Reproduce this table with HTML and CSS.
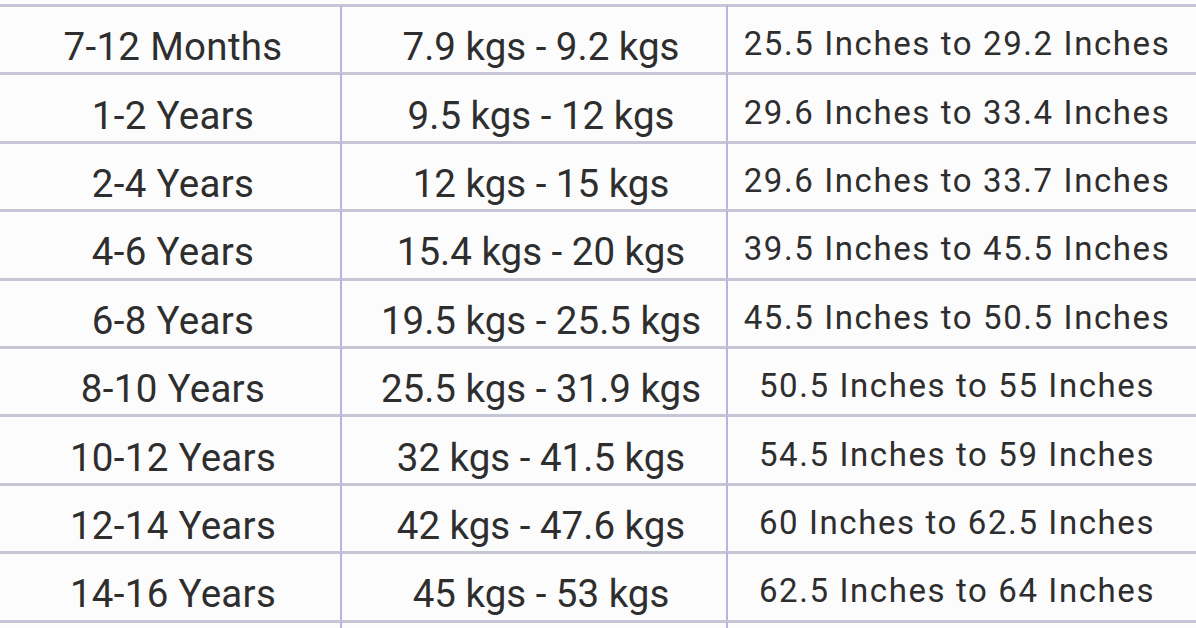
FILE: index.html
```html
<!DOCTYPE html>
<html>
<head>
<meta charset="utf-8">
<link rel="stylesheet" href="styles.css">
</head>
<body>
<div class="chart">
  <div class="cell">7-12 Months</div><div class="cell">7.9 kgs - 9.2 kgs</div><div class="cell">25.5 Inches to 29.2 Inches</div>
  <div class="cell">1-2 Years</div><div class="cell">9.5 kgs - 12 kgs</div><div class="cell">29.6 Inches to 33.4 Inches</div>
  <div class="cell">2-4 Years</div><div class="cell">12 kgs - 15 kgs</div><div class="cell">29.6 Inches to 33.7 Inches</div>
  <div class="cell">4-6 Years</div><div class="cell">15.4 kgs - 20 kgs</div><div class="cell">39.5 Inches to 45.5 Inches</div>
  <div class="cell">6-8 Years</div><div class="cell">19.5 kgs - 25.5 kgs</div><div class="cell">45.5 Inches to 50.5 Inches</div>
  <div class="cell">8-10 Years</div><div class="cell">25.5 kgs - 31.9 kgs</div><div class="cell">50.5 Inches to 55 Inches</div>
  <div class="cell">10-12 Years</div><div class="cell">32 kgs - 41.5 kgs</div><div class="cell">54.5 Inches to 59 Inches</div>
  <div class="cell">12-14 Years</div><div class="cell">42 kgs - 47.6 kgs</div><div class="cell">60 Inches to 62.5 Inches</div>
  <div class="cell">14-16 Years</div><div class="cell">45 kgs - 53 kgs</div><div class="cell">62.5 Inches to 64 Inches</div>
  <div class="cell tail"></div><div class="cell tail"></div><div class="cell tail"></div>
</div>
</body>
</html>
```
FILE: styles.css
```css
html, body {
  margin: 0;
  padding: 0;
  background: #fcfcfd;
  overflow: hidden;
}
.chart {
  display: grid;
  grid-template-columns: 342px 386px 1fr;
  grid-auto-rows: 68.4px;
  padding-top: 4px;
  font-family: Roboto, "Liberation Sans", sans-serif;
  font-size: 38.5px;
  letter-spacing: 0.3px;
  color: #2e2e2e;
}
.cell {
  box-sizing: border-box;
  display: flex;
  align-items: center;
  justify-content: center;
  border-top: 3px solid #c6c6d6;
  border-right: 2px solid #b4b4e6;
  padding-top: 14px;
  padding-left: 6px;
  white-space: nowrap;
}
.cell:nth-child(3n+2) {
  letter-spacing: 0;
  padding-left: 14px;
}
.cell:nth-child(3n) {
  border-right: 0;
  font-size: 33px;
  letter-spacing: 1.6px;
  padding-top: 8px;
  padding-left: 0;
  padding-right: 10px;
}
.tail {
  height: 20px;
}
```
